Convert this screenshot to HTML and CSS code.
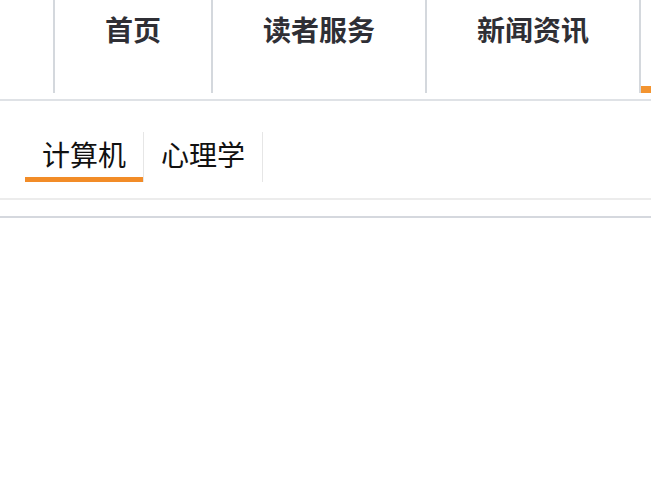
FILE: index.html
```html
<!DOCTYPE html>
<html lang="zh-CN">
<head>
  <meta charset="UTF-8" />
  <meta name="viewport" content="width=device-width, initial-scale=1.0"/>
  <title>图书分类</title>
  <link rel="stylesheet" href="styles.css">
</head>
<body>

  <div class="menu">
    <div class="menu-list">
      <a class="menu-item menu-clip" href="#"></a>
      <a class="menu-item" href="#">首页</a>
      <a class="menu-item" href="#">读者服务</a>
      <a class="menu-item" href="#">新闻资讯</a>
      <a class="menu-item menu-clip active" href="#"></a>
    </div>
  </div>

  <div class="category">
    <div class="tabs">
      <a class="tab current" href="#">计算机</a>
      <a class="tab" href="#">心理学</a>
    </div>
  </div>

  <div class="books"></div>

</body>
</html>
```

FILE: styles.css
```css
body {
  margin: 0;
  font-family: "Noto Sans CJK SC", "Noto Sans", sans-serif;
  background-color: #fff;
  color: #111;
}

a {
  text-decoration: none;
  color: inherit;
}

.menu {
  padding-bottom: 6px;
  border-bottom: 2px solid #dfe2e6;
  overflow: hidden;
}

.menu-list {
  display: flex;
  height: 93px;
  white-space: nowrap;
}

.menu-item {
  box-sizing: border-box;
  height: 93px;
  padding: 9px 50px 0;
  font-size: 28px;
  line-height: 40px;
  font-weight: 700;
  color: #2f2f35;
  border-right: 2px solid #d4d8dd;
  flex-shrink: 0;
}

.menu-clip {
  width: 55px;
  padding: 0;
}

.menu-item.active {
  width: 200px;
  border-bottom: 7px solid #f39430;
}

.category {
  padding: 31px 25px 16px;
  border-bottom: 2px solid #ececec;
}

.tabs {
  display: flex;
}

.tab {
  box-sizing: border-box;
  height: 50px;
  padding: 2px 17px 0;
  font-size: 28px;
  line-height: 40px;
  color: #111;
  border-right: 1px solid #e6e6e6;
}

.tab.current {
  box-shadow: inset 0 -5px 0 #f28c28;
}

.books {
  margin-top: 16px;
  border-top: 2px solid #d5d8de;
}
```
